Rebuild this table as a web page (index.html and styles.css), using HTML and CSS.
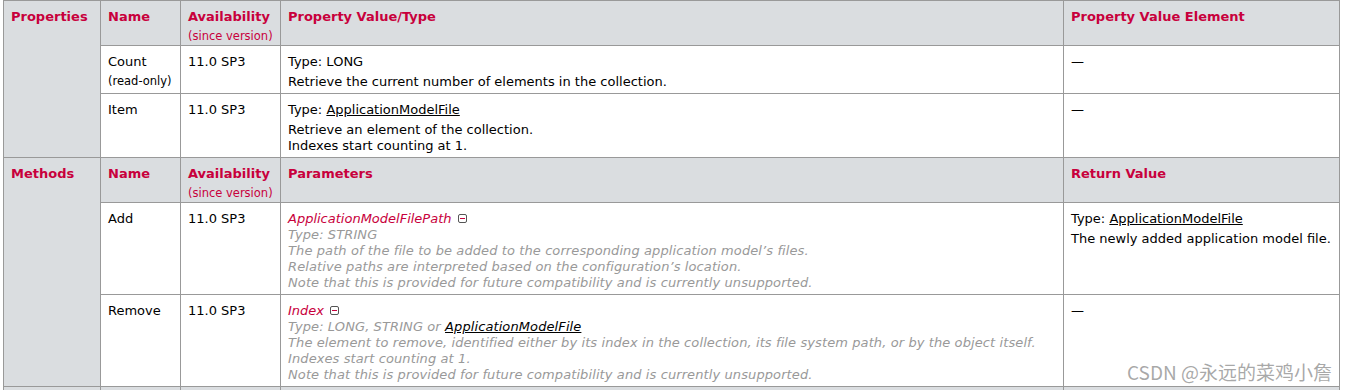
FILE: index.html
```html
<!DOCTYPE html>
<html lang="en">
<head>
  <meta charset="UTF-8">
  <title>ApplicationModelFiles</title>
  <link rel="stylesheet" href="styles.css">
</head>
<body>
  <div class="page">
    <table class="api">
      <colgroup>
        <col class="c-group">
        <col class="c-name">
        <col class="c-avail">
        <col class="c-value">
        <col class="c-elem">
      </colgroup>
      <tr>
        <th class="group" rowspan="3">Properties</th>
        <th>Name</th>
        <th>Availability<span class="since">(since version)</span></th>
        <th>Property Value/Type</th>
        <th>Property Value Element</th>
      </tr>
      <tr>
        <td>Count<span class="note">(read-only)</span></td>
        <td>11.0 SP3</td>
        <td>
          <p>Type: LONG</p>
          <p>Retrieve the current number of elements in the collection.</p>
        </td>
        <td>&mdash;</td>
      </tr>
      <tr>
        <td>Item</td>
        <td>11.0 SP3</td>
        <td>
          <p>Type: <a href="#">ApplicationModelFile</a></p>
          <p>Retrieve an element of the collection.<br>Indexes start counting at 1.</p>
        </td>
        <td>&mdash;</td>
      </tr>
      <tr>
        <th class="group" rowspan="3">Methods</th>
        <th>Name</th>
        <th>Availability<span class="since">(since version)</span></th>
        <th>Parameters</th>
        <th>Return Value</th>
      </tr>
      <tr>
        <td>Add</td>
        <td>11.0 SP3</td>
        <td>
          <div class="param">
            <span class="pname">ApplicationModelFilePath</span> <span class="toggle"></span>
            <div class="pdesc">
              Type: STRING<br>
              The path of the file to be added to the corresponding application model’s files.<br>
              Relative paths are interpreted based on the configuration’s location.<br>
              Note that this is provided for future compatibility and is currently unsupported.
            </div>
          </div>
        </td>
        <td>
          <p>Type: <a href="#">ApplicationModelFile</a></p>
          <p>The newly added application model file.</p>
        </td>
      </tr>
      <tr>
        <td>Remove</td>
        <td>11.0 SP3</td>
        <td>
          <div class="param">
            <span class="pname">Index</span> <span class="toggle"></span>
            <div class="pdesc">
              Type: LONG, STRING or <a href="#">ApplicationModelFile</a><br>
              The element to remove, identified either by its index in the collection, its file system path, or by the object itself.<br>
              Indexes start counting at 1.<br>
              Note that this is provided for future compatibility and is currently unsupported.
            </div>
          </div>
        </td>
        <td>&mdash;</td>
      </tr>
      <tr class="next">
        <th class="group"></th>
        <th></th>
        <th></th>
        <th></th>
        <th></th>
      </tr>
    </table>
    <div class="watermark">CSDN @永远的菜鸡小詹</div>
  </div>
</body>
</html>
```

FILE: styles.css
```css
body {
  margin: 0;
  font-family: "DejaVu Sans", Verdana, sans-serif;
  font-size: 13px;
  color: #000;
  background: #fff;
}
.page {
  position: relative;
  padding: 0 3px;
}
.api {
  border-collapse: collapse;
  table-layout: fixed;
  width: 1337px;
}
.c-group { width: 97px; }
.c-name { width: 80px; }
.c-avail { width: 100px; }
.c-value { width: 783px; }
.c-elem { width: 276px; }
.api th, .api td {
  border: 1px solid #999;
  padding: 8px 7px 3px;
  vertical-align: top;
  text-align: left;
  line-height: 16px;
}
.api th {
  background: #dadde0;
  color: #c8003c;
  font-weight: bold;
  padding-bottom: 1px;
  height: 35px;
}
.api td {
  background: #fff;
}
.since,
.note {
  display: block;
  font-weight: normal;
  font-size: 11.5px;
  line-height: 15px;
  margin-top: 4px;
}
.api p {
  margin: 0 0 4px;
}
.api p:last-child {
  margin-bottom: 0;
}
.api a {
  color: #000;
  text-decoration: underline;
}
.pname {
  color: #c8003c;
  font-style: italic;
}
.pdesc {
  color: #999;
  font-style: italic;
  letter-spacing: 0.1px;
}
.toggle {
  display: inline-block;
  width: 7px;
  height: 7px;
  border: 1px solid #555;
  border-radius: 2px;
  position: relative;
  vertical-align: 0;
  margin-left: 2px;
}
.toggle::after {
  content: "";
  position: absolute;
  left: 1px;
  right: 1px;
  top: 3px;
  height: 1px;
  background: #c8003c;
}
.watermark {
  position: absolute;
  right: 14px;
  top: 358px;
  font-family: "Noto Sans CJK SC", sans-serif;
  font-size: 19px;
  color: rgba(140, 140, 140, 0.75);
}
```
